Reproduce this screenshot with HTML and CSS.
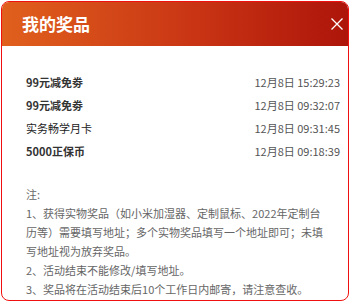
FILE: index.html
```html
<!DOCTYPE html>
<html lang="zh-CN">
<head>
<meta charset="utf-8">
<link rel="stylesheet" href="styles.css">
</head>
<body>
<div class="modal">
  <div class="header">
    <span class="title">我的奖品</span>
    <svg class="close" viewBox="0 0 12 12" width="12" height="12"><path d="M0.5 0.5 L11.5 11.5 M11.5 0.5 L0.5 11.5" stroke="#fff" stroke-width="1.3" fill="none"/></svg>
  </div>
  <div class="content">
    <ul class="list">
      <li class="row"><span class="name">99元减免劵</span><span class="time">12月8日 15:29:23</span></li>
      <li class="row"><span class="name">99元减免劵</span><span class="time">12月8日 09:32:07</span></li>
      <li class="row"><span class="name light">实务畅学月卡</span><span class="time">12月8日 09:31:45</span></li>
      <li class="row"><span class="name">5000正保币</span><span class="time">12月8日 09:18:39</span></li>
    </ul>
    <div class="notes">
      <p>注:</p>
      <p>1、获得实物奖品（如小米加湿器、定制鼠标、2022年定制台历等）需要填写地址；多个实物奖品填写一个地址即可；未填写地址视为放弃奖品。</p>
      <p>2、活动结束不能修改/填写地址。</p>
      <p>3、奖品将在活动结束后10个工作日内邮寄，请注意查收。</p>
    </div>
  </div>
</div>
</body>
</html>
```
FILE: styles.css
```css
html, body {
  margin: 0;
  padding: 0;
  background: #fff;
}
body {
  font-family: "Noto Sans CJK SC", "Noto Sans", sans-serif;
}
.modal {
  margin: 1px;
  width: 348px;
  height: 300px;
  box-sizing: border-box;
  border: 1px solid #f01010;
  border-radius: 8px;
  overflow: hidden;
  display: flex;
  flex-direction: column;
}
.header {
  height: 44px;
  flex: none;
  background: linear-gradient(90deg, #e0601d 0%, #c93514 55%, #ad150a 100%);
  display: flex;
  align-items: center;
  justify-content: space-between;
  padding: 0 5px 0 20px;
}
.title {
  color: #fff;
  font-size: 17px;
  font-weight: bold;
  line-height: 20px;
}
.close {
  display: block;
}
.content {
  padding: 25px 8px 0 24px;
}
.list {
  list-style: none;
  margin: 0;
  padding: 0;
}
.row {
  display: flex;
  justify-content: space-between;
  font-size: 11px;
  line-height: 23px;
}
.name {
  color: #333;
  font-weight: bold;
}
.name.light {
  font-weight: 400;
  color: #222;
}
.time {
  color: #555;
}
.notes {
  margin-top: 22px;
  color: #666;
  font-size: 11px;
  line-height: 19px;
  padding-right: 10px;
}
.notes p {
  margin: 0;
}
```
